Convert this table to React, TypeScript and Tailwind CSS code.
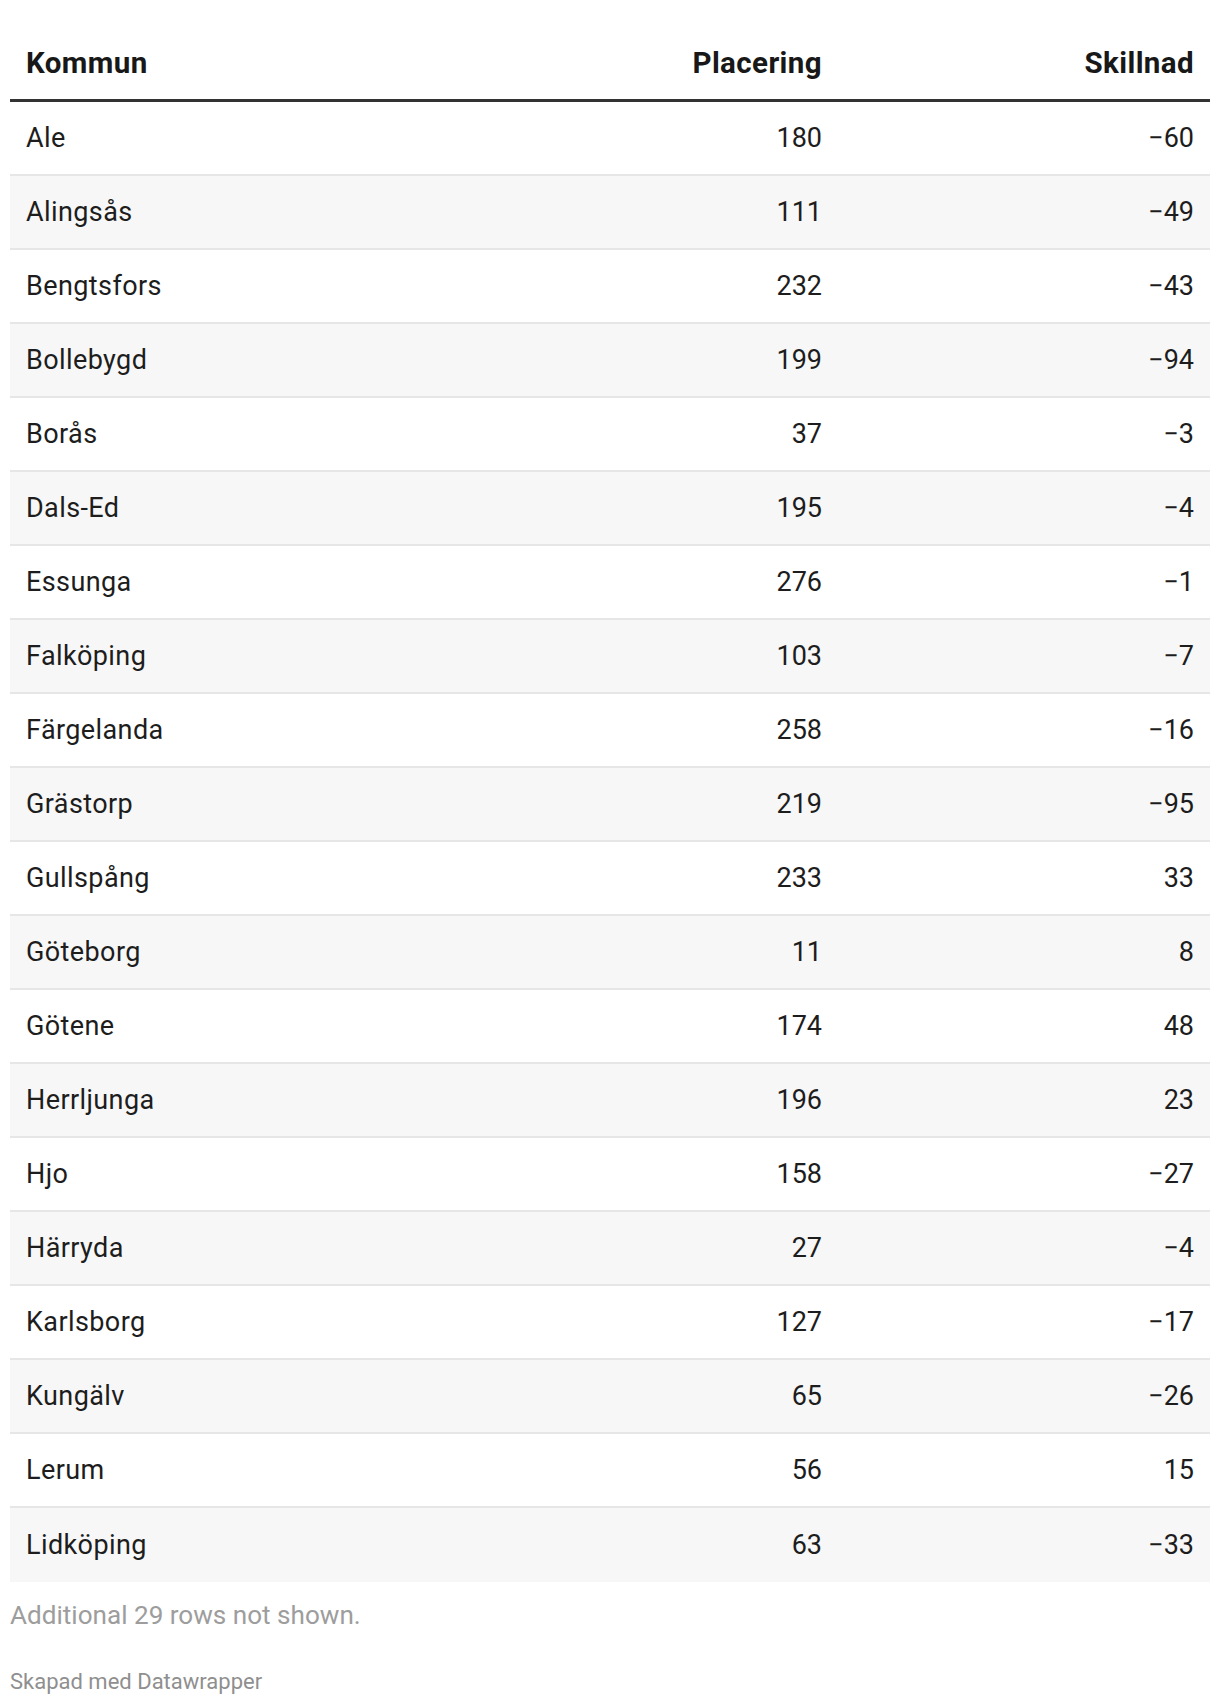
import React from 'react';

const ROWS = [
  { name: 'Ale', place: 180, diff: -60 },
  { name: 'Alingsås', place: 111, diff: -49 },
  { name: 'Bengtsfors', place: 232, diff: -43 },
  { name: 'Bollebygd', place: 199, diff: -94 },
  { name: 'Borås', place: 37, diff: -3 },
  { name: 'Dals-Ed', place: 195, diff: -4 },
  { name: 'Essunga', place: 276, diff: -1 },
  { name: 'Falköping', place: 103, diff: -7 },
  { name: 'Färgelanda', place: 258, diff: -16 },
  { name: 'Grästorp', place: 219, diff: -95 },
  { name: 'Gullspång', place: 233, diff: 33 },
  { name: 'Göteborg', place: 11, diff: 8 },
  { name: 'Götene', place: 174, diff: 48 },
  { name: 'Herrljunga', place: 196, diff: 23 },
  { name: 'Hjo', place: 158, diff: -27 },
  { name: 'Härryda', place: 27, diff: -4 },
  { name: 'Karlsborg', place: 127, diff: -17 },
  { name: 'Kungälv', place: 65, diff: -26 },
  { name: 'Lerum', place: 56, diff: 15 },
  { name: 'Lidköping', place: 63, diff: -33 },
];

// datawrapper style minus sign
const fmt = (n: number) => (n < 0 ? '\u2212' + Math.abs(n) : String(n));

export default function App() {
  return (
    <div className="bg-white min-h-screen px-[10px] font-['Roboto',sans-serif] text-[#1d1d1d]">
      <div className="flex items-center pt-[45px] pb-[18px] border-b-[3px] border-[#333333] text-[29.5px] leading-[36px] font-bold text-[#181818] tracking-[0.4px]">
        <div className="flex-1 px-[16px]">Kommun</div>
        <div className="w-[300px] px-[16px] text-right">Placering</div>
        <div className="w-[372px] px-[16px] text-right">Skillnad</div>
      </div>

      <div className="flex flex-col">
        {ROWS.map((r, i) => (
          <div
            key={r.name}
            className={`flex items-center h-[74px] text-[27px] pt-[1px] ${i % 2 === 1 ? 'bg-[#f7f7f7]' : 'bg-white'} ${i < ROWS.length - 1 ? 'border-b-2 border-[#e6e6e6]' : 'h-[72px]'}`}
          >
            <div className="flex-1 px-[16px] tracking-[0.4px]">{r.name}</div>
            <div className="w-[300px] px-[16px] text-right">{r.place}</div>
            <div className="w-[372px] px-[16px] text-right">{fmt(r.diff)}</div>
          </div>
        ))}
      </div>

      <p className="mt-[17px] text-[26.1px] leading-[32px] text-[#9d9d9d]">Additional 29 rows not shown.</p>
      <p className="mt-[37px] text-[22px] leading-[28px] text-[#8f8f8f]">Skapad med Datawrapper</p>
    </div>
  );
}
